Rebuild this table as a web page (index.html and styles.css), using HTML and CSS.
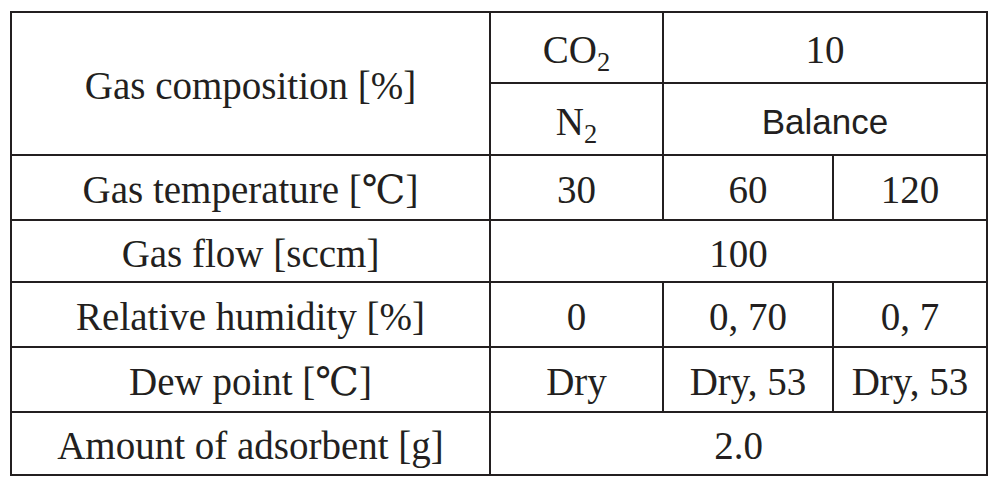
FILE: index.html
```html
<!DOCTYPE html>
<html>
<head>
<meta charset="utf-8">
<link rel="stylesheet" href="styles.css">
</head>
<body>
<table class="spec">
  <colgroup>
    <col class="c-label">
    <col class="c-a">
    <col class="c-b">
    <col class="c-c">
  </colgroup>
  <tr class="r1">
    <td rowspan="2">Gas composition [%]</td>
    <td>CO<sub>2</sub></td>
    <td colspan="2">10</td>
  </tr>
  <tr class="r2">
    <td>N<sub>2</sub></td>
    <td colspan="2" class="sans">Balance</td>
  </tr>
  <tr class="r3">
    <td>Gas temperature [℃]</td>
    <td>30</td>
    <td>60</td>
    <td>120</td>
  </tr>
  <tr class="r4">
    <td>Gas flow [sccm]</td>
    <td colspan="3">100</td>
  </tr>
  <tr class="r5">
    <td>Relative humidity [%]</td>
    <td>0</td>
    <td>0, 70</td>
    <td>0, 7</td>
  </tr>
  <tr class="r6">
    <td>Dew point [℃]</td>
    <td>Dry</td>
    <td>Dry, 53</td>
    <td>Dry, 53</td>
  </tr>
  <tr class="r7">
    <td>Amount of adsorbent [g]</td>
    <td colspan="3">2.0</td>
  </tr>
</table>
</body>
</html>
```

FILE: styles.css
```css
html, body {
  margin: 0;
  padding: 0;
  background: #ffffff;
}

body {
  font-family: "Liberation Serif", "DejaVu Serif", serif;
  color: #231f20;
}

.spec {
  border-collapse: collapse;
  table-layout: fixed;
  width: 976px;
  margin: 11px 0 0 10px;
  font-size: 39px;
  line-height: 1;
}

.c-label { width: 479px; }
.c-a { width: 173px; }
.c-b { width: 170px; }
.c-c { width: 154px; }

.spec td {
  box-sizing: border-box;
  border: 2px solid #231f20;
  text-align: center;
  vertical-align: middle;
  padding: 4px 0 0 0;
  white-space: nowrap;
}

.spec td.sans {
  font-family: "Liberation Sans", Arial, sans-serif;
  font-size: 35px;
}

.spec sub {
  font-size: 0.68em;
  vertical-align: -0.3em;
  line-height: 0;
}

.r1 td { height: 71px; }
.r2 td { height: 72px; }
.r3 td { height: 65px; }
.r4 td { height: 62px; }
.r5 td { height: 65px; }
.r6 td { height: 65px; }
.r7 td { height: 63px; }
```
